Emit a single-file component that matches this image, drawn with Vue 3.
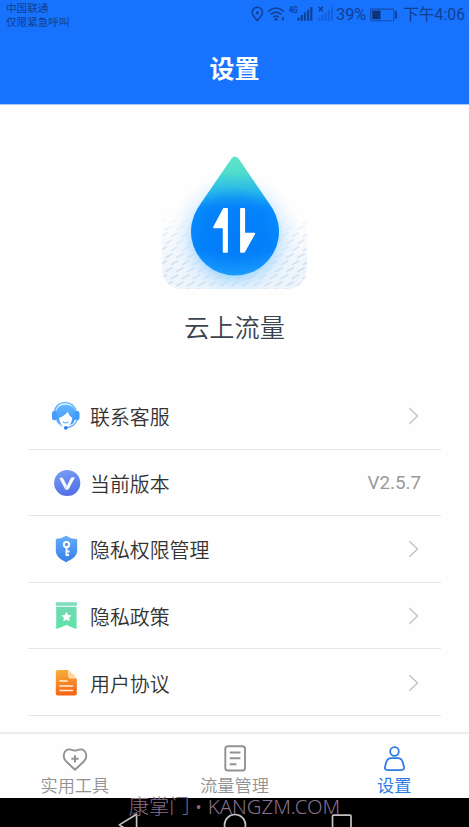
<script setup>
const rows = [
  { icon: 'service', label: '联系客服' },
  { icon: 'version', label: '当前版本', value: 'V2.5.7' },
  { icon: 'shield', label: '隐私权限管理' },
  { icon: 'bookmark', label: '隐私政策' },
  { icon: 'doc', label: '用户协议' },
]
const bars = [0, 1, 2, 3, 4]
</script>

<template>
  <div class="screen">
    <header class="header">
      <div class="status">
        <div class="carrier">
          <div>中国联通</div>
          <div>仅限紧急呼叫</div>
        </div>
        <div class="indicators">
          <svg class="signals" width="84" height="24" viewBox="250 0 84 24" fill="none">
            <path d="M257.3 20.500C254.500 17.300 252.100 15.200 252.100 12.500a5.200 5.200 0 0 1 10.400 0c0 2.700-2.400 4.800-5.200 8z" stroke="#123f92" stroke-width="1.500" />
            <circle cx="257.300" cy="12.800" r="1.500" fill="#123f92" />
            <g stroke="#123f92" stroke-width="1.500">
              <path d="M268 11.500q8-7 16 0M270.700 14.400q5.300-4.600 10.600 0M273.300 17.200q2.700-2.200 5.400 0" />
            </g>
            <circle cx="276" cy="19.300" r="1.500" fill="#123f92" />
            <path d="M282 16.500l2.500 2.200-2.500 2.200z" fill="#123f92" />
            <text x="289" y="13" class="net" textLength="8.500" lengthAdjust="spacingAndGlyphs">4G</text>
            <rect v-for="b in bars" :key="b" :x="297.500 + b * 3.200" :y="17.500 - b * 2.600" width="2.100" :height="3.300 + b * 2.600" fill="#123f92" />
            <path d="M318.700 6.800l4.200 4.400m0-4.400l-4.200 4.400" stroke="#123f92" stroke-width="1.400" />
            <rect v-for="b in bars" :key="'s' + b" :x="318.200 + b * 3.200" :y="17.500 - b * 2.600" width="2" :height="3.300 + b * 2.600" fill="#1560d8" />
          </svg>
          <span class="percent">39%</span>
          <svg class="battery" width="28" height="14" viewBox="0 0 28 14">
            <rect x=".7" y="1.100" width="23.200" height="11.600" rx="1" fill="none" stroke="#174ca6" stroke-width="1.100" />
            <rect x="2.200" y="2.600" width="8.300" height="8.600" fill="#0d337b" />
            <rect x="25" y="3.300" width="2" height="7.200" fill="#123f92" />
          </svg>
          <span class="time">下午4:06</span>
        </div>
      </div>
      <h1>设置</h1>
    </header>

    <main>
      <section class="brand">
        <svg width="170" height="160" viewBox="150 140 170 160">
          <defs>
            <linearGradient id="drop" x1="0" y1="0" x2="0" y2="1">
              <stop offset="0" stop-color="#63e5c5" />
              <stop offset=".14" stop-color="#4edccd" />
              <stop offset=".29" stop-color="#27b7e9" />
              <stop offset=".43" stop-color="#078bff" />
              <stop offset=".78" stop-color="#0583fb" />
              <stop offset="1" stop-color="#1c9cff" />
            </linearGradient>
            <radialGradient id="core" cx="235" cy="231" r="44" gradientUnits="userSpaceOnUse">
              <stop offset="0" stop-color="#0077f4" stop-opacity=".6" />
              <stop offset=".65" stop-color="#0077f4" stop-opacity=".4" />
              <stop offset="1" stop-color="#0077f4" stop-opacity="0" />
            </radialGradient>
            <radialGradient id="halo" cx="235" cy="237" r="66" gradientUnits="userSpaceOnUse">
              <stop offset=".57" stop-color="#9ad4ff" stop-opacity=".85" />
              <stop offset=".76" stop-color="#c9e6ff" stop-opacity=".45" />
              <stop offset="1" stop-color="#e9f4fd" stop-opacity="0" />
            </radialGradient>
            <linearGradient id="base" x1="0" y1="0" x2="0" y2="1">
              <stop offset=".5" stop-color="#edf4fb" stop-opacity="0" />
              <stop offset=".9" stop-color="#edf4fb" />
            </linearGradient>
            <linearGradient id="fade" x1="0" y1="0" x2="0" y2="1">
              <stop offset=".45" stop-color="#000" />
              <stop offset=".8" stop-color="#fff" />
            </linearGradient>
            <mask id="lower"><rect x="162" y="145" width="145" height="144" fill="url(#fade)" /></mask>
            <pattern id="dashes" width="11" height="14" patternUnits="userSpaceOnUse">
              <path d="M1 5.500l6-3.500M6.500 12.500l6-3.500M-4.500 12.500l6-3.500" stroke="#d0dfef" stroke-width="1.700" stroke-linecap="round" />
            </pattern>
          </defs>
          <rect x="162" y="145" width="145" height="144" rx="20" fill="url(#base)" />
          <rect x="162" y="145" width="145" height="144" rx="20" fill="url(#dashes)" mask="url(#lower)" />
          <rect x="162" y="145" width="145" height="144" rx="20" fill="url(#halo)" />
          <path d="M231.300 158.800q3.700-4.500 7.400 0C247 171 262 193 272.500 208.500A44 44 0 1 1 197.500 208.500C208 193 223 171 231.300 158.800z" fill="url(#drop)" />
          <circle cx="235" cy="231" r="44" fill="url(#core)" />
          <g fill="#fff" stroke="#fff" stroke-width="1.800" stroke-linejoin="round">
            <path d="M223.800 208.800h3.200v43h-3.300v-24.500h-9.700z" />
            <path d="M241 208.800h3.200v24.800h10.100l-10.200 18.200h-3.100z" />
          </g>
        </svg>
        <div class="name">云上流量</div>
      </section>

      <ul class="list">
        <li v-for="row in rows" :key="row.icon">
          <svg v-if="row.icon === 'service'" class="icon" width="30" height="30" viewBox="0 0 30 30">
            <defs><linearGradient id="g1" x1="0" y1="0" x2="0" y2="1"><stop stop-color="#63b7ff" /><stop offset="1" stop-color="#3f94f6" /></linearGradient></defs>
            <path d="M3.500 11C5-1.600 23-1.600 25.200 11" fill="none" stroke="#62b5fb" stroke-width="1.500" />
            <path d="M4.900 11.500C5.700.7 23.300.7 24.400 11.500v6C22.500 22 21.500 23 20.500 23.500L9 23.500C7.500 22 6 20.500 4.900 17.500z" fill="url(#g1)" />
            <path d="M8 17c3.400-1.100 6.400-3.200 9-6.200.5 2.700 1.800 4.500 4.200 6-.2 5-2.200 8-6.500 8.300-4.200-.2-6.300-3.300-6.700-8.100z" fill="#fff" />
            <path d="M11.700 20.800q2.900 2.200 5.800 0" fill="none" stroke="#76b8fb" stroke-width="1.100" />
            <rect x="1" y="10" width="4.800" height="9.200" rx="2.300" fill="#469bf7" />
            <rect x="23.700" y="10" width="4.800" height="9.200" rx="2.300" fill="#469bf7" />
            <path d="M26.200 18.500c-1.500 4.800-5.200 7.500-11.200 8.200" fill="none" stroke="#58aafa" stroke-width="1.200" />
            <path d="M5 19.500q2.500 4.500 6.500 5.800" fill="none" stroke="#8cc6fc" stroke-width="1" />
            <circle cx="14.800" cy="26.900" r="1.800" fill="#2978e8" />
          </svg>
          <svg v-else-if="row.icon === 'version'" class="icon" width="30" height="30" viewBox="0 0 30 30">
            <defs><linearGradient id="g2" x1="0" y1="0" x2=".3" y2="1"><stop stop-color="#79a0f5" /><stop offset="1" stop-color="#5472e6" /></linearGradient></defs>
            <circle cx="16.200" cy="15" r="13.100" fill="url(#g2)" />
            <path d="M8.400 10.200q2.600-1.500 4 .5l3.400 6.600-1.600 4.100z" fill="#f0f5ff" />
            <path d="M14.200 21.400l5.600-11.500q1.400-1.300 4-.3l-5.700 10.800q-1.500 2-3.900 1z" fill="#fff" />
          </svg>
          <svg v-else-if="row.icon === 'shield'" class="icon" width="30" height="30" viewBox="0 0 30 30">
            <defs><linearGradient id="g3" x1="0" y1="0" x2="0" y2="1"><stop stop-color="#67adf7" /><stop offset="1" stop-color="#3580e9" /></linearGradient></defs>
            <path d="M15 1.800q-4 3-9.200 3-1 .2-1 1.300v10.400C4.800 22.300 9.400 25.200 15 28.200c6.100-3 11.200-5.900 11.200-11.700V6.100q0-1.100-1.100-1.300Q19.500 4.800 15.900 1.900 15.500 1.500 15 1.800z" fill="url(#g3)" />
            <circle cx="15.500" cy="10.600" r="2.700" fill="none" stroke="#fff" stroke-width="1.900" />
            <path d="M15.500 13.200v8.900M15.500 17.500h3M15.500 21h2.500" fill="none" stroke="#fff" stroke-width="1.900" />
          </svg>
          <svg v-else-if="row.icon === 'bookmark'" class="icon" width="30" height="30" viewBox="0 0 30 30">
            <defs><linearGradient id="g4" x1="0" y1="0" x2="0" y2="1"><stop stop-color="#73d9b5" /><stop offset="1" stop-color="#5de3a5" /></linearGradient></defs>
            <rect x="4.800" y="1.300" width="21.200" height="3.500" rx=".9" fill="#7edbbc" />
            <path d="M5.200 5.700h20.400v21.500q0 1-1 .6L15.500 24l-9.200 3.800q-1.100.4-1.100-.7z" fill="url(#g4)" />
            <path d="M15.500 10.800l1.600 3.100 3.500.5-2.500 2.400.6 3.500-3.200-1.600-3.200 1.600.6-3.500-2.500-2.400 3.500-.5z" fill="#fff" />
          </svg>
          <svg v-else class="icon" width="30" height="30" viewBox="0 0 30 30">
            <defs><linearGradient id="g5" x1="0" y1="0" x2=".15" y2="1"><stop stop-color="#f8ae3d" /><stop offset=".5" stop-color="#f88d2b" /><stop offset="1" stop-color="#f46615" /></linearGradient></defs>
            <path d="M6.800 2h10.800l8.200 8v15.400q0 2-2 2H6.800q-2 0-2-2V4q0-2 2-2z" fill="url(#g5)" />
            <path d="M17.700 2l8.200 8h-6.200q-2 0-2-2z" fill="#ffd28e" stroke="#fff" stroke-width=".7" />
            <path d="M9 13.100h7M9 17.900h12.500M9 22.500h12.500" stroke="#ffefdc" stroke-width="1.500" stroke-linecap="round" />
          </svg>
          <span class="label">{{ row.label }}</span>
          <span v-if="row.value" class="value">{{ row.value }}</span>
          <svg v-else class="chevron" width="12" height="18" viewBox="0 0 12 18">
            <path d="M1.300 1.300L9.500 9l-8.200 7.700" fill="none" stroke="#c3c3c3" stroke-width="1.400" />
          </svg>
        </li>
      </ul>
    </main>

    <nav class="tabs">
      <div class="tab">
        <svg width="30" height="30" viewBox="0 0 30 30" fill="none" stroke="#929292" stroke-width="1.900" stroke-linejoin="round">
          <path d="M15 25.800L6 17.300C1.600 12.800 4.200 5.400 9.300 5.400c2.300 0 4.100 1.200 5.700 1.200s3.400-1.200 5.700-1.200c5.100 0 7.700 7.400 3.300 11.900z" />
          <path d="M15 11.200v7.200M11.400 14.800h7.200" stroke-width="2" />
        </svg>
        <span>实用工具</span>
      </div>
      <div class="tab">
        <svg width="30" height="30" viewBox="0 0 30 30" fill="none" stroke="#929292" stroke-width="1.900">
          <rect x="5.300" y="2.300" width="19.700" height="24.200" rx="2.600" />
          <path d="M9.700 8.500h10.700M9.700 14.300h10.700M9.700 20.200h6.700" />
        </svg>
        <span>流量管理</span>
      </div>
      <div class="tab active">
        <svg width="30" height="30" viewBox="0 0 30 30" fill="none" stroke="#2d7be5" stroke-width="1.800">
          <circle cx="15.500" cy="7.500" r="4.300" />
          <path d="M12 14.200h7q3.300 0 4.700 3.900l1.200 4.300q.9 3.800-3 3.800H9.100q-3.900 0-3-3.800l1.200-4.300q1.400-3.900 4.700-3.900z" />
        </svg>
        <span>设置</span>
      </div>
    </nav>

    <footer class="system">
      <svg width="469" height="29" viewBox="0 798 469 29" fill="none" stroke="#c2c2c2" stroke-width="1.700">
        <path d="M136.600 814.300v21.200l-17.300-10.600z" stroke-linejoin="round" />
        <circle cx="235" cy="825" r="10.500" />
        <rect x="332.500" y="815.200" width="18.500" height="18.500" rx="1" />
      </svg>
      <div class="mark">康掌门 • KANGZM.COM</div>
    </footer>
  </div>
</template>

<style>
body {
  margin: 0;
  overflow: hidden;
}
</style>

<style scoped>
.screen {
  width: 469px;
  height: 827px;
  overflow: hidden;
  display: flex;
  flex-direction: column;
  background: #fefefe;
  font-family: Roboto, "Noto Sans CJK SC", sans-serif;
  color: #333;
}
.header {
  height: 105px;
  flex: none;
  box-sizing: border-box;
  background: #1772fe;
  border-bottom: 1px solid #a9c8fb;
}
.status {
  height: 30px;
  display: flex;
  justify-content: space-between;
  color: #123f92;
}
.carrier {
  padding: 2px 0 0 6px;
  font-size: 10.600px;
  line-height: 14px;
}
.indicators {
  display: flex;
  align-items: center;
  height: 29px;
  padding-right: 4px;
}
.signals {
  align-self: flex-start;
  margin-right: 2px;
}
.net {
  font: bold 8.500px Roboto, sans-serif;
  fill: #123f92;
}
.percent {
  width: 34px;
  font-size: 16.300px;
}
.battery {
  margin-right: 5px;
}
.time {
  width: 62px;
  font-size: 15.800px;
  line-height: 20px;
  margin-top: 1px;
  white-space: nowrap;
}
h1 {
  margin: 20px 0 0;
  font-size: 25px;
  line-height: 40px;
  font-weight: 700;
  text-align: center;
  color: #fff;
}
main {
  flex: 1;
  min-height: 0;
}
.brand {
  height: 278px;
  padding-top: 35px;
  box-sizing: border-box;
  display: flex;
  flex-direction: column;
  align-items: center;
}
.brand svg {
  flex: none;
}
.name {
  margin-top: 11px;
  font-size: 25.200px;
  line-height: 36px;
  font-weight: 350;
  color: #3a4350;
}
.list {
  list-style: none;
  margin: 0 28px;
  padding: 0;
}
.list li {
  height: 66.600px;
  box-sizing: border-box;
  border-bottom: 1px solid #e5e5e5;
  display: flex;
  align-items: center;
  padding: 1px 20px 0 23px;
}
.icon {
  flex: none;
  margin-right: 9px;
}
.label {
  flex: 1;
  padding-top: 1px;
  font-size: 19.900px;
  font-weight: 350;
}
.value {
  padding-top: 1px;
  font-size: 18.800px;
  color: #999;
}
.chevron {
  margin-right: 1px;
}
.tabs {
  height: 66px;
  flex: none;
  margin: 0 -5px;
  box-sizing: border-box;
  border-top: 2px solid #ececec;
  display: flex;
}
.tab {
  flex: 1;
  display: flex;
  flex-direction: column;
  align-items: center;
  padding-top: 10px;
  font-size: 17.200px;
  line-height: 24px;
  font-weight: 350;
  color: #929292;
}
.tab svg {
  flex: none;
}
.active {
  color: #2d7be5;
  font-weight: 400;
}
.system {
  height: 29px;
  flex: none;
  background: #000;
  position: relative;
}
.system svg {
  display: block;
}
.mark {
  position: absolute;
  inset: 0 0 auto;
  text-align: center;
  font-family: "Noto Sans", "Noto Sans CJK SC", sans-serif;
  font-size: 20.300px;
  font-weight: 300;
  line-height: 16px;
  color: #86708a;
}
</style>
